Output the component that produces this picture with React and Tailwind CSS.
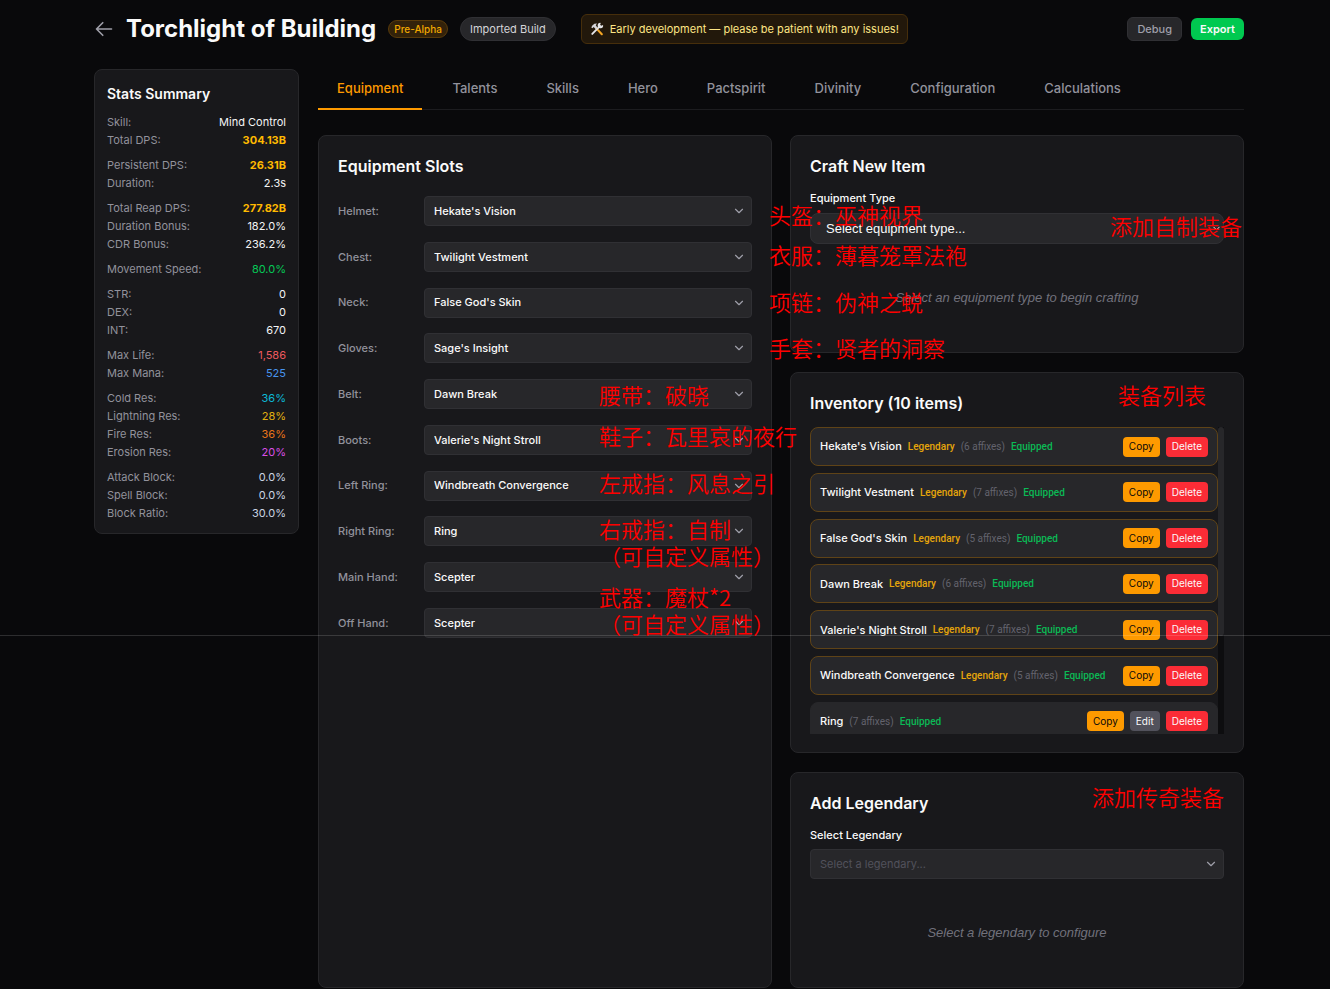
import React, { useState } from 'react';
import { ChevronDown } from 'lucide-react';

const STAT_GROUPS = [
  [['Skill:', 'Mind Control', 'text-zinc-100'], ['Total DPS:', '304.13B', 'text-[#ffb900] font-bold']],
  [['Persistent DPS:', '26.31B', 'text-[#ffb900] font-bold'], ['Duration:', '2.3s', 'text-zinc-100']],
  [
    ['Total Reap DPS:', '277.82B', 'text-[#ffb900] font-bold'],
    ['Duration Bonus:', '182.0%', 'text-zinc-100'],
    ['CDR Bonus:', '236.2%', 'text-zinc-100'],
  ],
  [['Movement Speed:', '80.0%', 'text-[#05c957]']],
  [['STR:', '0', 'text-zinc-100'], ['DEX:', '0', 'text-zinc-100'], ['INT:', '670', 'text-zinc-100']],
  [['Max Life:', '1,586', 'text-[#ed5a5e]'], ['Max Mana:', '525', 'text-[#4794ee]']],
  [
    ['Cold Res:', '36%', 'text-[#0cb8d8]'],
    ['Lightning Res:', '28%', 'text-[#e0b010]'],
    ['Fire Res:', '36%', 'text-[#e8741a]'],
    ['Erosion Res:', '20%', 'text-[#d94fe8]'],
  ],
  [['Attack Block:', '0.0%', 'text-[#cad5e2]'], ['Spell Block:', '0.0%', 'text-[#cad5e2]'], ['Block Ratio:', '30.0%', 'text-[#cad5e2]']],
];

const TABS = ['Equipment', 'Talents', 'Skills', 'Hero', 'Pactspirit', 'Divinity', 'Configuration', 'Calculations'];

const SLOTS = [
  ['Helmet', "Hekate's Vision"],
  ['Chest', 'Twilight Vestment'],
  ['Neck', "False God's Skin"],
  ['Gloves', "Sage's Insight"],
  ['Belt', 'Dawn Break'],
  ['Boots', "Valerie's Night Stroll"],
  ['Left Ring', 'Windbreath Convergence'],
  ['Right Ring', 'Ring'],
  ['Main Hand', 'Scepter'],
  ['Off Hand', 'Scepter'],
];

const INVENTORY = [
  { name: "Hekate's Vision", affixes: 6, legendary: true },
  { name: 'Twilight Vestment', affixes: 7, legendary: true },
  { name: "False God's Skin", affixes: 5, legendary: true },
  { name: 'Dawn Break', affixes: 6, legendary: true },
  { name: "Valerie's Night Stroll", affixes: 7, legendary: true },
  { name: 'Windbreath Convergence', affixes: 5, legendary: true },
  { name: 'Ring', affixes: 7, legendary: false },
];

// Translator's notes pinned over the page
const NOTES = [
  { text: '头盔：巫神视界', pos: 'left-[769px] top-[204px]' },
  { text: '衣服：薄暮笼罩法袍', pos: 'left-[769px] top-[244px]' },
  { text: '项链：伪神之蜕', pos: 'left-[769px] top-[291px]' },
  { text: '手套：贤者的洞察', pos: 'left-[769px] top-[337px]' },
  { text: '腰带：破晓', pos: 'left-[599px] top-[384px]' },
  { text: '鞋子：瓦里哀的夜行', pos: 'left-[599px] top-[425px]' },
  { text: '左戒指：风息之引', pos: 'left-[599px] top-[472px]' },
  { text: '右戒指：自制', pos: 'left-[599px] top-[518px]' },
  { text: '（可自定义属性）', pos: 'left-[599px] top-[545px]' },
  { text: '武器：魔杖*2', pos: 'left-[599px] top-[586px]' },
  { text: '（可自定义属性）', pos: 'left-[599px] top-[613px]' },
  { text: '添加自制装备', pos: 'left-[1110px] top-[215px]' },
  { text: '装备列表', pos: 'left-[1118px] top-[384px]' },
  { text: '添加传奇装备', pos: 'left-[1092px] top-[786px]' },
];

function BackIcon() {
  return (
    <svg viewBox="0 0 24 24" className="h-5 w-5" fill="none" stroke="currentColor" strokeWidth="2" strokeLinecap="round" strokeLinejoin="round" aria-hidden="true">
      <path d="M10.5 19.5 3 12l7.5-7.5M3 12h18" />
    </svg>
  );
}

function ToolsIcon() {
  return (
    <svg viewBox="0 0 16 16" className="h-[14px] w-[14px] shrink-0" aria-hidden="true">
      <path d="M7 7 L13.5 14" stroke="#f5a623" strokeWidth="2.4" strokeLinecap="round" />
      <path d="M1.5 6.2 L2.4 4.2 L5 2 L8 1.6 L6.6 3.6 L8.4 6.2 L6.4 8 L4.2 5.8 L2.8 7.2 Z" fill="#d4d4d8" />
      <path d="M2.6 13.6 L10.8 5.2" stroke="#e4e4e7" strokeWidth="2.2" strokeLinecap="round" />
      <path d="M14.9 3.4 A3.1 3.1 0 1 1 12.3 1 L11.6 3.2 L12.8 4.4 Z" fill="#e4e4e7" />
    </svg>
  );
}

function Panel({ title, className = '', children }) {
  return (
    <section className={`rounded-lg border border-[#27272a] bg-[#18181b] px-[19px] pt-[18px] ${className}`}>
      <h2 className="text-base leading-6 font-semibold text-zinc-50">{title}</h2>
      {children}
    </section>
  );
}

function SlotSelect({ id, value, placeholder }) {
  return (
    <div className="relative flex-1">
      <select
        id={id}
        defaultValue={value}
        className={`block h-[30px] w-full appearance-none rounded-sm border border-[#303034] bg-[#27272a] px-[9px] text-[11px] ${placeholder ? 'text-[#52525c]' : 'font-medium text-zinc-50'}`}
      >
        <option>{value}</option>
      </select>
      <ChevronDown className="pointer-events-none absolute top-2 right-[6px] h-[14px] w-[14px] text-[#9f9fa9]" />
    </div>
  );
}

function InventoryRow({ item }) {
  return (
    <li
      className={`flex h-[39px] shrink-0 items-center gap-[6px] rounded-lg border bg-[#27272a] px-[9px] text-[10px] ${item.legendary ? 'border-[#5f4317]' : 'border-[#27272a]'}`}
    >
      <span className="text-[11px] font-medium text-zinc-50">{item.name}</span>
      <span className="mr-auto flex gap-[6px] font-['Roboto',sans-serif]">
        {item.legendary && <span className="font-medium text-[#e5a50a]">Legendary</span>}
        <span className="text-[#63636d]">({item.affixes} affixes)</span>
        <span className="font-medium text-[#0bb955]">Equipped</span>
      </span>
      <button type="button" className="h-[20px] rounded-sm bg-[#fe9a00] px-[6px] text-zinc-950">Copy</button>
      {!item.legendary && <button type="button" className="h-[20px] rounded-sm bg-[#52525c] px-[6px] text-zinc-50">Edit</button>}
      <button type="button" className="h-[20px] rounded-sm bg-[#fb2c36] px-[6px] text-zinc-50">Delete</button>
    </li>
  );
}

export default function App() {
  const [activeTab, setActiveTab] = useState('Equipment');

  return (
    <div className="relative flex min-h-screen flex-col overflow-hidden bg-[#09090b] pr-[86px] pb-px pl-[94px] font-['Inter','Noto_Sans_CJK_SC',sans-serif] text-zinc-50">
      {/* Header */}
      <header className="flex h-[58px] items-center whitespace-nowrap">
        <a href="#builds" aria-label="Back" className="mr-3 text-[#9f9fa9]">
          <BackIcon />
        </a>
        <h1 className="text-2xl leading-8 font-bold">Torchlight of Building</h1>
        <span className="ml-3 rounded-full border border-[#5a3b0a] bg-[#33220a] px-[5px] text-[10px] leading-4 font-medium text-[#f0a800]">Pre-Alpha</span>
        <span className="ml-3 rounded-full border border-[#303034] bg-[#27272a] px-[9px] text-[11px] leading-[22px] text-zinc-300">Imported Build</span>
        <div className="ml-[25px] flex h-[30px] items-center gap-[6px] rounded-md border border-[#462e0b] bg-[#22180b] px-2 text-[11px] text-[#fee685]">
          <ToolsIcon />
          <span>Early development — please be patient with any issues!</span>
        </div>
        <div className="ml-auto flex items-center gap-[9px] text-[11px] font-medium">
          <button type="button" className="h-[24px] rounded-md border border-[#303034] bg-[#27272a] px-[9px] text-[#9f9fa9]">Debug</button>
          <button type="button" className="h-[22px] rounded-md bg-[#00c950] px-[9px] font-semibold text-zinc-50">Export</button>
        </div>
      </header>

      <div className="mt-[11px] flex flex-1 items-stretch gap-[19px]">
        {/* Stats */}
        <aside className="w-[205px] shrink-0 self-start rounded-lg border border-[#27272a] bg-[#18181b] px-3 pt-3 pb-[11px]">
          <h2 className="mb-[7px] text-sm leading-6 font-semibold">Stats Summary</h2>
          <div className="flex flex-col gap-[7px] text-[11px] leading-[18px]">
            {STAT_GROUPS.map((group) => (
              <dl key={group[0][0]}>
                {group.map(([label, value, color]) => (
                  <div key={label} className="flex justify-between">
                    <dt className="text-[#92929c]">{label}</dt>
                    <dd className={color}>{value}</dd>
                  </div>
                ))}
              </dl>
            ))}
          </div>
        </aside>

        <main className="flex min-w-0 flex-1 flex-col">
          <nav className="flex h-[41px] shrink-0 gap-[11px] border-b border-[#1c1c1f] text-[13px] font-medium">
            {TABS.map((tab) => (
              <button
                key={tab}
                type="button"
                onClick={() => setActiveTab(tab)}
                className={`-mb-px border-b-2 px-[19px] ${tab === activeTab ? 'border-[#fe9a00] text-[#fe9a00]' : 'border-transparent text-[#92929c]'}`}
              >
                {tab}
              </button>
            ))}
          </nav>

          <div className="mt-[25px] grid flex-1 grid-cols-2 gap-[18px]">
            <Panel title="Equipment Slots">
              <div className="mt-[18px] flex h-[442px] flex-col justify-between">
                {SLOTS.map(([slot, item]) => (
                  <div key={slot} className="flex items-center">
                    <label htmlFor={slot} className="w-[86px] text-[11px] font-medium text-[#92929c]">{slot}:</label>
                    <SlotSelect id={slot} value={item} />
                  </div>
                ))}
              </div>
            </Panel>

            <div className="flex flex-col gap-[19px]">
              <Panel title="Craft New Item" className="h-[218px]">
                <label htmlFor="craft-type" className="mt-3 block text-[11px] leading-4 font-medium">Equipment Type</label>
                <div className="relative mt-[7px]">
                  <select
                    id="craft-type"
                    defaultValue="Select equipment type..."
                    className="block h-[31px] w-full appearance-none rounded-lg border border-[#303034] bg-[#27272a] px-[15px] font-['Liberation_Sans',sans-serif] text-[13px] text-zinc-50"
                  >
                    <option>Select equipment type...</option>
                  </select>
                  <ChevronDown className="pointer-events-none absolute top-[10px] right-[2px] h-[11px] w-[11px] text-zinc-50" />
                </div>
                <p className="mt-[44px] text-center font-['Liberation_Sans',sans-serif] text-[13px] leading-5 text-[#71717b] italic">Select an equipment type to begin crafting</p>
              </Panel>

              <Panel title="Inventory (10 items)" className="h-[381px]">
                <div className="mt-3 flex h-[307px] overflow-hidden">
                  <ul className="flex h-[314px] flex-1 flex-col justify-between whitespace-nowrap">
                    {INVENTORY.map((item) => (
                      <InventoryRow key={item.name} item={item} />
                    ))}
                  </ul>
                  <div className="w-[6px] bg-[#0d0d0f]">
                    <div className="h-[68%] rounded-full bg-[#27272a]" />
                  </div>
                </div>
              </Panel>

              <Panel title="Add Legendary" className="flex-1">
                <label htmlFor="legendary" className="mt-3 mb-[6px] block text-[11px] leading-4 font-medium">Select Legendary</label>
                <SlotSelect id="legendary" value="Select a legendary..." placeholder />
                <p className="mt-[44px] text-center font-['Liberation_Sans',sans-serif] text-[13px] leading-5 text-[#71717b] italic">Select a legendary to configure</p>
              </Panel>
            </div>
          </div>
        </main>
      </div>

      {/* Guide line and notes over the page */}
      <div className="pointer-events-none absolute inset-x-0 top-[635px] h-px bg-white/15" />
      {NOTES.map((note) => (
        <span
          key={note.pos}
          className={`pointer-events-none absolute font-['Noto_Sans_CJK_SC',sans-serif] text-[22px] leading-5 font-[350] whitespace-nowrap text-[#ff0000] ${note.pos}`}
        >
          {note.text}
        </span>
      ))}
    </div>
  );
}
